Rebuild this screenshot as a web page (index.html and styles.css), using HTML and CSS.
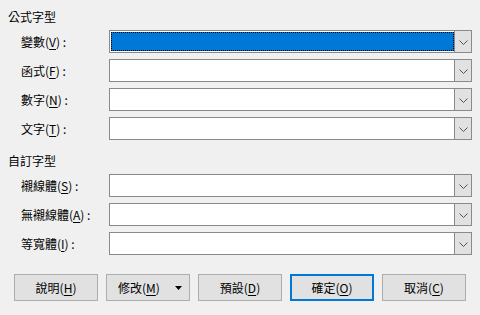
FILE: index.html
```html
<!DOCTYPE html>
<html>
<head>
<meta charset="utf-8">
<link rel="stylesheet" href="styles.css">
</head>
<body>
<div class="dialog">
  <div class="heading first">公式字型</div>
  <div class="rows">
    <div class="label">變數(<u>V</u>) :</div>
    <div class="combo focused"><div class="field"><div class="sel"></div></div><div class="btn"><svg width="9" height="5" viewBox="0 0 9 5"><path d="M0.5 0.5 L4.5 4.5 L8.5 0.5" fill="none" stroke="#555" stroke-width="1"/></svg></div></div>
    <div class="label">函式(<u>F</u>) :</div>
    <div class="combo"><div class="field"></div><div class="btn"><svg width="9" height="5" viewBox="0 0 9 5"><path d="M0.5 0.5 L4.5 4.5 L8.5 0.5" fill="none" stroke="#555" stroke-width="1"/></svg></div></div>
    <div class="label">數字(<u>N</u>) :</div>
    <div class="combo"><div class="field"></div><div class="btn"><svg width="9" height="5" viewBox="0 0 9 5"><path d="M0.5 0.5 L4.5 4.5 L8.5 0.5" fill="none" stroke="#555" stroke-width="1"/></svg></div></div>
    <div class="label">文字(<u>T</u>) :</div>
    <div class="combo"><div class="field"></div><div class="btn"><svg width="9" height="5" viewBox="0 0 9 5"><path d="M0.5 0.5 L4.5 4.5 L8.5 0.5" fill="none" stroke="#555" stroke-width="1"/></svg></div></div>
  </div>
  <div class="heading second">自訂字型</div>
  <div class="rows">
    <div class="label">襯線體(<u>S</u>) :</div>
    <div class="combo"><div class="field"></div><div class="btn"><svg width="9" height="5" viewBox="0 0 9 5"><path d="M0.5 0.5 L4.5 4.5 L8.5 0.5" fill="none" stroke="#555" stroke-width="1"/></svg></div></div>
    <div class="label">無襯線體(<u>A</u>) :</div>
    <div class="combo"><div class="field"></div><div class="btn"><svg width="9" height="5" viewBox="0 0 9 5"><path d="M0.5 0.5 L4.5 4.5 L8.5 0.5" fill="none" stroke="#555" stroke-width="1"/></svg></div></div>
    <div class="label">等寬體(<u>I</u>) :</div>
    <div class="combo"><div class="field"></div><div class="btn"><svg width="9" height="5" viewBox="0 0 9 5"><path d="M0.5 0.5 L4.5 4.5 L8.5 0.5" fill="none" stroke="#555" stroke-width="1"/></svg></div></div>
  </div>
  <div class="buttons">
    <div class="button">說明(<u>H</u>)</div>
    <div class="button menu"><span>修改(<u>M</u>)</span><svg width="7" height="4" viewBox="0 0 7 4"><path d="M0 0 H7 L3.5 4 Z" fill="#000"/></svg></div>
    <div class="button">預設(<u>D</u>)</div>
    <div class="button default">確定(<u>O</u>)</div>
    <div class="button">取消(<u>C</u>)</div>
  </div>
</div>
</body>
</html>
```

FILE: styles.css
```css
html, body {
  margin: 0;
  padding: 0;
  background: #f0f0f0;
}
body {
  font-family: "Noto Sans CJK TC", "Noto Sans", sans-serif;
  font-size: 12px;
  color: #000;
  width: 480px;
  height: 315px;
  overflow: hidden;
}
.dialog {
  padding: 8px 8px 0 8px;
}
.heading {
  height: 18px;
  line-height: 18px;
}
.heading.first {
  margin-bottom: 4px;
}
.heading.second {
  margin-top: 12px;
  margin-bottom: 4px;
}
.rows {
  display: grid;
  grid-template-columns: 101px 363px;
  row-gap: 6px;
}
.label {
  padding-left: 13px;
  height: 23px;
  line-height: 23px;
  white-space: nowrap;
}
u {
  text-decoration: underline;
  text-underline-offset: 2px;
}
.combo {
  height: 23px;
  box-sizing: border-box;
  border: 1px solid #8a8a8e;
  background: #fff;
  display: flex;
}
.field {
  flex: 1;
  padding: 1px;
}
.combo.focused .field {
  padding: 1px 0 1px 1px;
}
.sel {
  height: 100%;
  box-sizing: border-box;
  background: #0078d7;
  outline: 1px dotted #000;
  outline-offset: -1px;
  border: 1px dotted #fff;
}
.btn {
  width: 17px;
  box-sizing: border-box;
  border-left: 1px solid #8a8a8e;
  background: #e1e1e1;
  display: flex;
  align-items: center;
  justify-content: center;
  padding-top: 1px;
}
.buttons {
  margin-top: 19px;
  display: flex;
  gap: 8px;
  padding-left: 6px;
}
.button {
  width: 84px;
  height: 27px;
  box-sizing: border-box;
  border: 1px solid #adadad;
  background: #e1e1e1;
  display: flex;
  align-items: center;
  justify-content: center;
}
.button.menu {
  justify-content: flex-start;
  padding-left: 11px;
  gap: 15px;
}
.button.default {
  border: 2px solid #0078d7;
}
```
